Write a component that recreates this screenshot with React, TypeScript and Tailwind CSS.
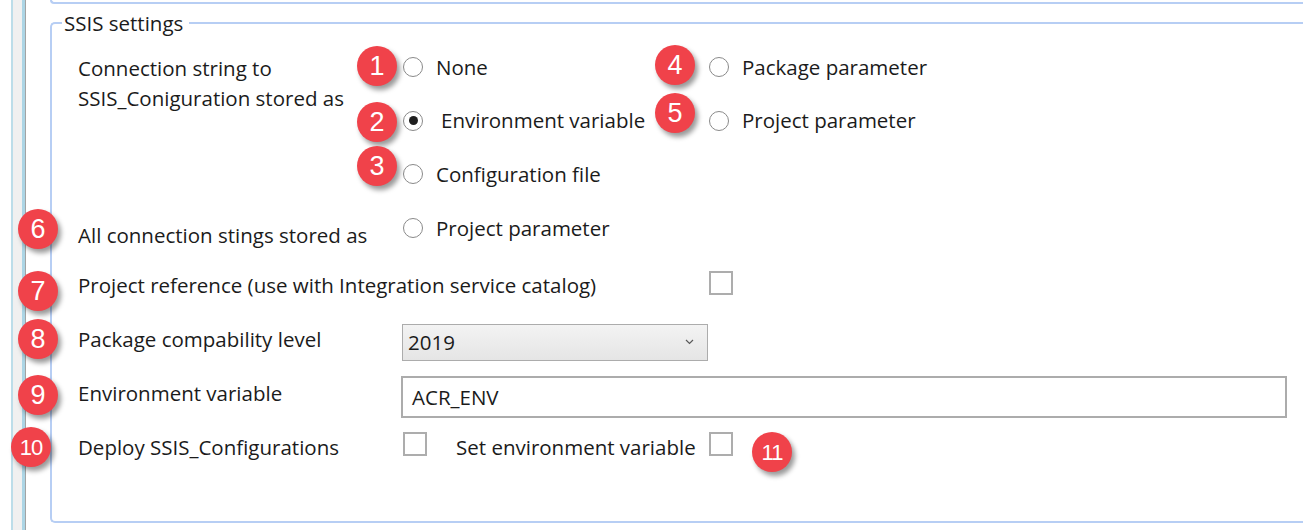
import React from "react";

const badges = [
  { n: "1", x: 377, y: 66 },
  { n: "2", x: 377, y: 122 },
  { n: "3", x: 377, y: 166 },
  { n: "4", x: 675, y: 65 },
  { n: "5", x: 675, y: 113 },
  { n: "6", x: 38, y: 229 },
  { n: "7", x: 38, y: 291 },
  { n: "8", x: 38, y: 339 },
  { n: "9", x: 38, y: 395 },
  { n: "10", x: 31, y: 447 },
  { n: "11", x: 772, y: 452 },
];

function Radio({
  checked,
  label,
  gap = "ml-[13px]",
  offset = "ml-[2px]",
}: {
  checked?: boolean;
  label: string;
  gap?: string;
  offset?: string;
}) {
  return (
    <div className="flex items-center">
      <span className={`${offset} w-[20px] h-[20px] rounded-full border border-[#8a8a8a] bg-white flex items-center justify-center`}>
        {checked && <span className="w-[9px] h-[9px] rounded-full bg-[#1f1f1f]" />}
      </span>
      <span className={gap}>{label}</span>
    </div>
  );
}

function Checkbox({ className = "" }: { className?: string }) {
  return <span className={`block w-[24px] h-[24px] border-2 border-[#adadad] bg-white ${className}`} />;
}

export default function App() {
  return (
    <div className="relative w-[1303px] h-[530px] overflow-hidden bg-white flex font-['Open_Sans',sans-serif] text-[20.5px] text-[#1b1b1b]">
      {/* left splitter strip */}
      <div className="ml-[11px] w-[15px] h-full flex">
        <div className="w-[2px] bg-[#bcdde9]" />
        <div className="w-[9px] bg-[#f0f0f0]" />
        <div className="w-[3px] bg-[#acd5e5]" />
        <div className="w-[1px] bg-[#a3a3a3]" />
      </div>

      <div className="flex-1 ml-[24px] flex flex-col">
        {/* end of previous group */}
        <div className="h-[4px] border-l-2 border-b-2 border-[#b7cef4] rounded-bl-[4px]" />

        {/* SSIS settings group */}
        <fieldset className="mt-[6px] h-[513px] border-2 border-r-0 border-[#b7cef4] rounded-l-[5px]">
          <legend className="ml-[10px] pl-[2px] pr-[6px] h-[26px] leading-[26px]">SSIS settings</legend>

          <div className="ml-[26px] mt-[4px] grid grid-cols-[323px_308px_1fr] grid-rows-[54px_53px_54px_54px_56px_62px_48px_46px]">
            {/* connection string */}
            <div className="row-span-3 self-start mt-[13px] leading-[30px]">
              Connection string to
              <br />
              SSIS_Coniguration stored as
            </div>
            <Radio label="None" />
            <Radio label="Package parameter" offset="ml-0" />
            <Radio checked label="Environment variable" gap="ml-[18px]" />
            <Radio label="Project parameter" offset="ml-0" />
            <Radio label="Configuration file" />
            <div />

            {/* all connection strings */}
            <div className="self-center mt-[14px]">All connection stings stored as</div>
            <Radio label="Project parameter" />
            <div />

            {/* project reference */}
            <div className="col-span-2 self-center mt-[4px]">Project reference (use with Integration service catalog)</div>
            <div className="flex items-center">
              <Checkbox />
            </div>

            {/* compatibility level */}
            <div className="self-center mb-[6px]">Package compability level</div>
            <div className="flex items-center">
              <div className="ml-[1px] w-[306px] h-[37px] border border-[#acacac] bg-gradient-to-b from-[#f3f3f3] to-[#e5e5e5] flex items-center justify-between pl-[5px] pr-[13px]">
                <span>2019</span>
                <svg width="9" height="6" viewBox="0 0 9 6" fill="none">
                  <path d="M1 1l3.5 3.5L8 1" stroke="#5a5a5a" strokeWidth="1.2" />
                </svg>
              </div>
            </div>
            <div />

            {/* environment variable */}
            <div className="self-center mb-[8px]">Environment variable</div>
            <div className="col-span-2 flex items-center">
              <div className="w-[886px] h-[42px] border-2 border-[#acacac] bg-white flex items-center pl-[9px]">ACR_ENV</div>
            </div>

            {/* deploy */}
            <div className="self-center mt-[6px]">Deploy SSIS_Configurations</div>
            <div className="flex items-center">
              <Checkbox className="ml-[2px]" />
              <span className="ml-[29px] mt-[6px]">Set environment variable</span>
            </div>
            <div className="flex items-center">
              <Checkbox />
            </div>
          </div>
        </fieldset>
      </div>

      {/* numbered callouts */}
      {badges.map((b) => (
        <div
          key={b.n}
          className="absolute w-[40px] h-[40px] -ml-[20px] -mt-[20px] rounded-full bg-[#f0424a] shadow-[3px_4px_5px_rgba(0,0,0,0.4)] flex items-center justify-center text-white font-['Liberation_Sans',Arial,sans-serif]"
          style={{ left: b.x, top: b.y }}
        >
          <span className={b.n.length > 1 ? "text-[22px] tracking-[-1px]" : "text-[27px]"}>{b.n}</span>
        </div>
      ))}
    </div>
  );
}
